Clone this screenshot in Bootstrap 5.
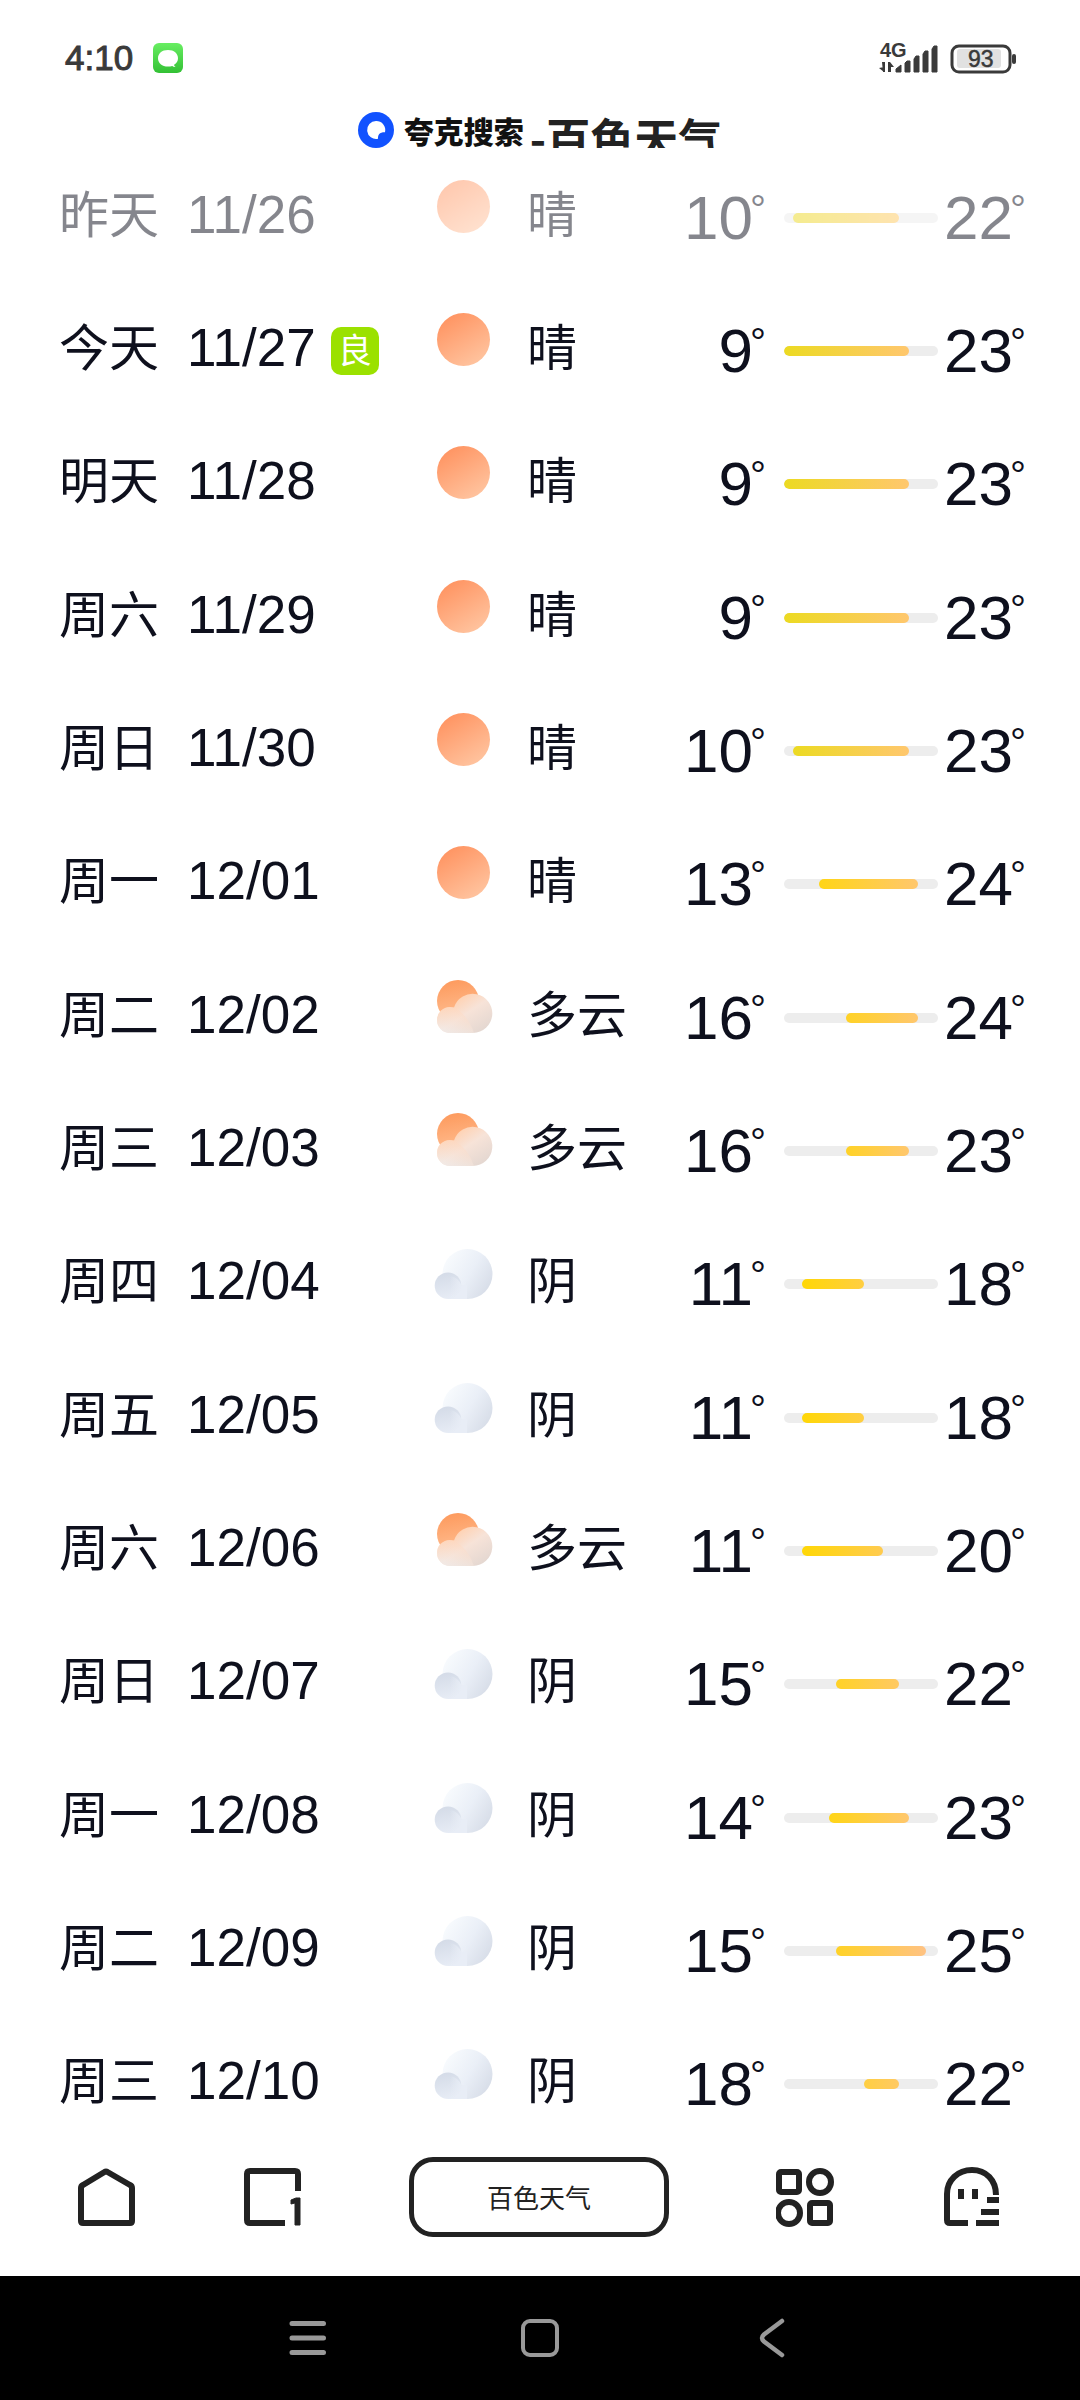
<!DOCTYPE html>
<html lang="zh-CN">
<head>
<meta charset="utf-8">
<meta name="viewport" content="width=device-width, initial-scale=1">
<title>百色天气</title>
<link href="https://cdn.jsdelivr.net/npm/bootstrap@5.3.0/dist/css/bootstrap.min.css" rel="stylesheet">
<style>
  :root { --ink: #0e101d; --ui: #222; }
  body { font-family: "Liberation Sans", "Noto Sans CJK SC", sans-serif; color: var(--ink); background: #fff; }
  svg { display: block; }
  .icon-btn { line-height: 0; }

  /* status bar */
  .status { height: 108px; padding: 8px 63px 0 65px; color: #3a3a3a; }
  .status svg { overflow: visible; }
  .clock { font-size: 35px; line-height: 44px; -webkit-text-stroke: 1px #3a3a3a; }

  /* page title */
  .title-bar { height: 43px; color: #111; }
  .brand-name { font-family: "Noto Sans CJK SC", sans-serif; font-weight: 900; font-size: 30px; line-height: 44px; margin: 0 6px 0 10px; }
  .page-name { font-family: "Noto Sans CJK SC", sans-serif; font-weight: 700; font-size: 44px; line-height: 58px; height: 40px; overflow: hidden; color: var(--ui); }

  /* forecast */
  .forecast-row {
    display: grid;
    align-items: center;
    grid-template-columns: 128px minmax(0, 247fr) 93px 113px minmax(0, 126fr) 18px minmax(0, 154fr) 88px;
    padding: 0 54px 0 59px;
  }
  .past { opacity: .5; }
  .cjk { font-family: "Noto Sans CJK SC", sans-serif; font-size: 50px; line-height: 60px; padding-bottom: 14px; white-space: nowrap; }
  .date { font-size: 53px; line-height: 60px; padding-bottom: 6px; }
  .aqi { font-family: "Noto Sans CJK SC", sans-serif; width: 48px; height: 48px; line-height: 44px; font-size: 34px; border-radius: 10px; background: #9be100; margin-left: 15px; }
  .sky { padding-bottom: 22px; }
  .temp { font-size: 62px; line-height: 70px; white-space: nowrap; display: flex; justify-content: flex-end; }
  .deg { font-size: 40px; line-height: 52px; margin-left: -3px; }
  .track { grid-column: 7; height: 10px; border-radius: 5px; background: #ededed; overflow: hidden; }
  .span-bar { height: 10px; border-radius: 5px; background: linear-gradient(90deg, var(--from), var(--to)); }
  .f9 { --from: #ecda22; } .f11 { --from: #ffd706; } .f13 { --from: #ffd516; } .f15 { --from: #ffd226; } .f18 { --from: #ffcf42; }
  .t18 { --to: #ffce42; } .t20 { --to: #ffcb50; } .t22 { --to: #ffc963; } .t23 { --to: #ffc76e; } .t25 { --to: #ffc283; }

  /* browser toolbar */
  .toolbar { height: 125px; padding: 6px 78px 39px 76px; }
  .page-pill { width: 260px; height: 80px; border: 5px solid var(--ui); border-radius: 24px; background: #fff; color: var(--ui); font-family: "Noto Sans CJK SC", sans-serif; font-size: 26px; line-height: 36px; }

  /* system navigation */
  .sysnav { height: 124px; background: #000; }
  .sysnav button { width: 232px; }
</style>
</head>
<body>
<svg width="0" height="0" class="position-absolute" aria-hidden="true">
  <defs>
    <linearGradient id="gSun" x1=".2" y1="0" x2=".8" y2="1"><stop offset="0" stop-color="#ff925f"/><stop offset="1" stop-color="#ffc6a2"/></linearGradient>
    <linearGradient id="gSun2" x1=".3" y1="0" x2=".5" y2="1"><stop offset="0" stop-color="#fd9a5d"/><stop offset="1" stop-color="#ffc196"/></linearGradient>
    <linearGradient id="gPuff" gradientUnits="userSpaceOnUse" x1="26" y1="20" x2="50" y2="56"><stop offset="0" stop-color="#ffd2b3"/><stop offset=".4" stop-color="#f7e3d8"/><stop offset="1" stop-color="#e2d6d0"/></linearGradient>
    <linearGradient id="gPuffLow" gradientUnits="userSpaceOnUse" x1="26" y1="32" x2="18" y2="56"><stop offset="0" stop-color="#ffd8bf" stop-opacity=".8"/><stop offset="1" stop-color="#f0edec"/></linearGradient>
    <linearGradient id="gGrey" x1=".1" y1=".2" x2="1" y2=".75"><stop offset="0" stop-color="#f7fafd"/><stop offset=".5" stop-color="#eaeff7"/><stop offset="1" stop-color="#d6dce7"/></linearGradient>
    <linearGradient id="gGreyLow" gradientUnits="userSpaceOnUse" x1="14" y1="30" x2="20" y2="56"><stop offset="0" stop-color="#d5dce8"/><stop offset="1" stop-color="#e8edf6"/></linearGradient>
    <linearGradient id="gGreyFade" gradientUnits="userSpaceOnUse" x1="16" y1="0" x2="28" y2="0"><stop offset="0" stop-color="#e8edf6" stop-opacity="0"/><stop offset="1" stop-color="#e8edf6"/></linearGradient>
    <linearGradient id="gMsg" x1="0" y1="0" x2="0" y2="1"><stop offset="0" stop-color="#68ee62"/><stop offset="1" stop-color="#33c135"/></linearGradient>
  </defs>
  <symbol id="sunny" viewBox="0 0 60 60"><circle cx="29.5" cy="29.5" r="26.5" fill="url(#gSun)"/></symbol>
  <symbol id="partly" viewBox="0 0 60 60">
    <circle cx="24" cy="24" r="21" fill="url(#gSun2)"/>
    <path d="M16 56A13 13 0 0 1 16 30Q18 30 20 30.500A19.600 19.600 0 1 1 39 56Z" fill="url(#gPuff)"/>
    <path d="M16 56A13 13 0 0 1 16 30Q18 30 20 30.500Q34 38 40 56Z" fill="url(#gPuffLow)" opacity=".6"/>
  </symbol>
  <symbol id="overcast" viewBox="0 0 60 60">
    <circle cx="33.500" cy="31" r="25" fill="url(#gGrey)"/>
    <path d="M14 56H33V42H14Z" fill="#e8edf6"/>
    <circle cx="14" cy="42.700" r="13.300" fill="url(#gGreyLow)"/>
    <path d="M16 56V33Q24 34 28 43V56Z" fill="url(#gGreyFade)"/>
  </symbol>
</svg>

<div class="d-flex flex-column min-vh-100">
  <header class="flex-shrink-0">
    <div class="status d-flex align-items-center justify-content-between">
      <div class="d-flex align-items-center">
        <span class="clock">4:10</span>
        <svg class="ms-3" width="34" height="32" viewBox="-2 0 34 32" aria-label="短信"><rect x="2" y="1" width="30" height="30" rx="6" fill="url(#gMsg)"/><path d="M17 8c-6 0-10 3.500-10 8.300 0 4.700 4 8.300 10 8.300 1.500 0 2.900-.2 4.200-.7.900.8 2 1.100 3.400 1-1-.6-1.400-1.300-1.500-2.200 2.500-1.500 3.900-3.700 3.900-6.400C27 11.500 23 8 17 8z" fill="#fff"/></svg>
      </div>
      <svg width="140" height="44" viewBox="876 35 140 44" fill="#3a3a3a" aria-label="4G 93">
        <text x="879" y="56" font-size="20" font-weight="700">4G</text>
        <path d="M881 61h3v10h-2zM878 67l5-1v5zM887 61h2l4 5h-3v5h-3z"/>
        <path d="M895 71v-3l5-4v7zM904 71v-9l2-2h3v11zM913 71V58l2-3h3v16zM922 71V53l2-3h3v21zM931 71V48l2-3h3v26z" stroke="#3a3a3a" stroke-linejoin="round"/>
        <rect x="956" y="48" width="44" height="19" rx="3" fill="#e1e1e1"/>
        <rect x="951" y="45" width="58" height="26" rx="7" fill="none" stroke="#3a3a3a" stroke-width="3"/>
        <rect x="1011" y="53" width="4" height="10" rx="2"/>
        <text x="967" y="66" font-size="23" stroke="#3a3a3a" stroke-width=".5">93</text>
      </svg>
    </div>
    <div class="title-bar d-flex justify-content-center align-items-start">
      <svg class="mt-1" width="36" height="36" viewBox="0 0 36 36" aria-hidden="true"><circle cx="18" cy="18" r="18" fill="#1152ff"/><path d="M18 9a9 9 0 1 0 2 17.800c0-4 1-6.500 7-6.500A9 9 0 0 0 18 9z" fill="#fff"/></svg>
      <span class="brand-name">夸克搜索</span>
      <h1 class="page-name mb-0">-百色天气</h1>
    </div>
  </header>

  <main class="flex-grow-1 d-flex">
    <ul class="list-unstyled mb-0 w-100 d-flex flex-column">
      <li class="forecast-row flex-fill past"><span class="cjk">昨天</span><span class="date">11/26</span><svg class="sky" width="60" height="82"><use href="#sunny" width="60" height="60"/></svg><span class="cjk">晴</span><span class="temp">10<span class="deg">°</span></span><div class="track f9 t22"><div class="span-bar" style="margin-left:6%;width:69%"></div></div><span class="temp">22<span class="deg">°</span></span></li>
      <li class="forecast-row flex-fill"><span class="cjk">今天</span><span class="d-flex align-items-center"><span class="date">11/27</span><span class="aqi text-white text-center">良</span></span><svg class="sky" width="60" height="82"><use href="#sunny" width="60" height="60"/></svg><span class="cjk">晴</span><span class="temp">9<span class="deg">°</span></span><div class="track f9 t23"><div class="span-bar" style="margin-left:0%;width:81%"></div></div><span class="temp">23<span class="deg">°</span></span></li>
      <li class="forecast-row flex-fill"><span class="cjk">明天</span><span class="date">11/28</span><svg class="sky" width="60" height="82"><use href="#sunny" width="60" height="60"/></svg><span class="cjk">晴</span><span class="temp">9<span class="deg">°</span></span><div class="track f9 t23"><div class="span-bar" style="margin-left:0%;width:81%"></div></div><span class="temp">23<span class="deg">°</span></span></li>
      <li class="forecast-row flex-fill"><span class="cjk">周六</span><span class="date">11/29</span><svg class="sky" width="60" height="82"><use href="#sunny" width="60" height="60"/></svg><span class="cjk">晴</span><span class="temp">9<span class="deg">°</span></span><div class="track f9 t23"><div class="span-bar" style="margin-left:0%;width:81%"></div></div><span class="temp">23<span class="deg">°</span></span></li>
      <li class="forecast-row flex-fill"><span class="cjk">周日</span><span class="date">11/30</span><svg class="sky" width="60" height="82"><use href="#sunny" width="60" height="60"/></svg><span class="cjk">晴</span><span class="temp">10<span class="deg">°</span></span><div class="track f9 t23"><div class="span-bar" style="margin-left:6%;width:75%"></div></div><span class="temp">23<span class="deg">°</span></span></li>
      <li class="forecast-row flex-fill"><span class="cjk">周一</span><span class="date">12/01</span><svg class="sky" width="60" height="82"><use href="#sunny" width="60" height="60"/></svg><span class="cjk">晴</span><span class="temp">13<span class="deg">°</span></span><div class="track f13 t23"><div class="span-bar" style="margin-left:23%;width:64%"></div></div><span class="temp">24<span class="deg">°</span></span></li>
      <li class="forecast-row flex-fill"><span class="cjk">周二</span><span class="date">12/02</span><svg class="sky" width="60" height="82"><use href="#partly" width="60" height="60"/></svg><span class="cjk">多云</span><span class="temp">16<span class="deg">°</span></span><div class="track f15 t23"><div class="span-bar" style="margin-left:40%;width:47%"></div></div><span class="temp">24<span class="deg">°</span></span></li>
      <li class="forecast-row flex-fill"><span class="cjk">周三</span><span class="date">12/03</span><svg class="sky" width="60" height="82"><use href="#partly" width="60" height="60"/></svg><span class="cjk">多云</span><span class="temp">16<span class="deg">°</span></span><div class="track f15 t23"><div class="span-bar" style="margin-left:40%;width:41%"></div></div><span class="temp">23<span class="deg">°</span></span></li>
      <li class="forecast-row flex-fill"><span class="cjk">周四</span><span class="date">12/04</span><svg class="sky" width="60" height="82"><use href="#overcast" width="60" height="60"/></svg><span class="cjk">阴</span><span class="temp">11<span class="deg">°</span></span><div class="track f11 t18"><div class="span-bar" style="margin-left:12%;width:40%"></div></div><span class="temp">18<span class="deg">°</span></span></li>
      <li class="forecast-row flex-fill"><span class="cjk">周五</span><span class="date">12/05</span><svg class="sky" width="60" height="82"><use href="#overcast" width="60" height="60"/></svg><span class="cjk">阴</span><span class="temp">11<span class="deg">°</span></span><div class="track f11 t18"><div class="span-bar" style="margin-left:12%;width:40%"></div></div><span class="temp">18<span class="deg">°</span></span></li>
      <li class="forecast-row flex-fill"><span class="cjk">周六</span><span class="date">12/06</span><svg class="sky" width="60" height="82"><use href="#partly" width="60" height="60"/></svg><span class="cjk">多云</span><span class="temp">11<span class="deg">°</span></span><div class="track f11 t20"><div class="span-bar" style="margin-left:12%;width:52%"></div></div><span class="temp">20<span class="deg">°</span></span></li>
      <li class="forecast-row flex-fill"><span class="cjk">周日</span><span class="date">12/07</span><svg class="sky" width="60" height="82"><use href="#overcast" width="60" height="60"/></svg><span class="cjk">阴</span><span class="temp">15<span class="deg">°</span></span><div class="track f15 t22"><div class="span-bar" style="margin-left:34%;width:41%"></div></div><span class="temp">22<span class="deg">°</span></span></li>
      <li class="forecast-row flex-fill"><span class="cjk">周一</span><span class="date">12/08</span><svg class="sky" width="60" height="82"><use href="#overcast" width="60" height="60"/></svg><span class="cjk">阴</span><span class="temp">14<span class="deg">°</span></span><div class="track f13 t23"><div class="span-bar" style="margin-left:29%;width:52%"></div></div><span class="temp">23<span class="deg">°</span></span></li>
      <li class="forecast-row flex-fill"><span class="cjk">周二</span><span class="date">12/09</span><svg class="sky" width="60" height="82"><use href="#overcast" width="60" height="60"/></svg><span class="cjk">阴</span><span class="temp">15<span class="deg">°</span></span><div class="track f15 t25"><div class="span-bar" style="margin-left:34%;width:58%"></div></div><span class="temp">25<span class="deg">°</span></span></li>
      <li class="forecast-row flex-fill"><span class="cjk">周三</span><span class="date">12/10</span><svg class="sky" width="60" height="82"><use href="#overcast" width="60" height="60"/></svg><span class="cjk">阴</span><span class="temp">18<span class="deg">°</span></span><div class="track f18 t22"><div class="span-bar" style="margin-left:52%;width:23%"></div></div><span class="temp">22<span class="deg">°</span></span></li>
    </ul>
  </main>

  <nav class="toolbar flex-shrink-0 d-flex align-items-center justify-content-between">
    <button type="button" class="icon-btn border-0 bg-transparent p-0" aria-label="主页"><svg width="60" height="60" viewBox="0 0 60 60" fill="none" stroke="#222" stroke-width="6" stroke-linejoin="round"><path d="M5 54V21Q5 19 7 18L28.500 5Q30 4 31.500 5L54 18Q56 19 56 21V54Q56 56 54 56H7Q5 56 5 54Z"/></svg></button>
    <button type="button" class="icon-btn border-0 bg-transparent p-0" aria-label="标签页"><svg width="60" height="60" viewBox="0 0 60 60" fill="none" stroke="#222" stroke-width="6"><path d="M42 56H7Q4 56 4 53V7Q4 4 7 4H52Q55 4 55 7V24" stroke-linejoin="round"/><path d="M48 33L53 31H57V58H52V36L48 37Z" fill="#222" stroke-width="1"/></svg></button>
    <button type="button" class="page-pill p-0">百色天气</button>
    <button type="button" class="icon-btn border-0 bg-transparent p-0" aria-label="应用"><svg width="60" height="60" viewBox="0 0 60 60" fill="none" stroke="#222" stroke-width="6"><rect x="3" y="5" width="20" height="20" rx="2"/><circle cx="44" cy="15" r="11"/><circle cx="13" cy="46" r="11"/><rect x="34" y="36" width="20" height="20" rx="2"/></svg></button>
    <button type="button" class="icon-btn border-0 bg-transparent p-0" aria-label="我的"><svg width="60" height="60" viewBox="0 0 60 60" fill="none" stroke="#222" stroke-width="6"><path d="M26 56H8Q5 56 5 53V27C5 13 16 3 30 3S54 13 54 28"/><path d="M19 22V32M33 22V32M45 33H57M39 45H57M34 56H57"/></svg></button>
  </nav>

  <footer class="sysnav flex-shrink-0 d-flex align-items-center justify-content-center">
    <button type="button" class="icon-btn border-0 bg-transparent p-0" aria-label="最近任务"><svg class="mx-auto" width="40" height="40" viewBox="0 0 40 40" stroke="#999" stroke-width="5" stroke-linecap="round"><path d="M4 5.500H35.500M4 20H35.500M4 34.500H35.500"/></svg></button>
    <button type="button" class="icon-btn border-0 bg-transparent p-0" aria-label="桌面"><svg class="mx-auto" width="40" height="40" viewBox="0 0 40 40" fill="none" stroke="#999" stroke-width="4"><rect x="3" y="3" width="34" height="34" rx="7"/></svg></button>
    <button type="button" class="icon-btn border-0 bg-transparent p-0" aria-label="返回"><svg class="mx-auto" width="40" height="40" viewBox="0 0 40 40" fill="none" stroke="#999" stroke-width="4.500" stroke-linecap="round"><path d="M30 3L12 16.500Q8 20 12 23.500L30 37"/></svg></button>
  </footer>
</div>
<script src="https://cdn.jsdelivr.net/npm/bootstrap@5.3.0/dist/js/bootstrap.bundle.min.js"></script>
</body>
</html>
